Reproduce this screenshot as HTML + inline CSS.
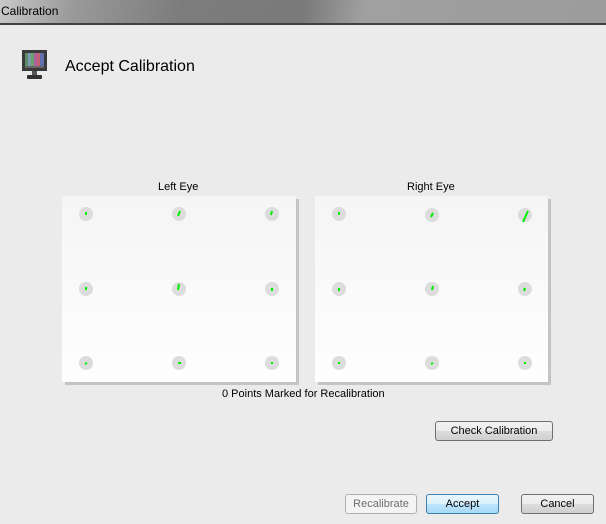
<!DOCTYPE html>
<html><head><meta charset="utf-8"><style>
body{margin:0;width:606px;height:524px;background:#ebebeb;font-family:"Liberation Sans",sans-serif;position:relative;overflow:hidden}
.tb{position:absolute;left:0;top:0;width:606px;height:23px;background:linear-gradient(100deg,#c8c8c8 0%,#9a9a9a 12%,#7c7c7c 30%,#7a7a7a 50%,#a0a0a0 60%,#9c9c9c 100%);border-bottom:1px solid #d0d0d0}
.tb2{position:absolute;left:0;top:23px;width:606px;height:2px;background:#404040}
.tt{position:absolute;left:1px;top:4px;font-size:12px;color:#000}
.h{position:absolute;left:65px;top:58px;font-size:16px;color:#000}
.lbl{position:absolute;font-size:11px;color:#000}
.btn{position:absolute;height:20px;box-sizing:border-box;border:1px solid #707070;border-radius:3px;background:linear-gradient(#f2f2f2 0%,#ebebeb 50%,#dddddd 51%,#cfcfcf 100%);font-size:11px;text-align:center;line-height:19px;color:#000}
</style></head><body>
<div class="tb"></div><div class="tb2"></div>
<div class="tt">Calibration</div>
<svg style="position:absolute;left:20px;top:48px" width="30" height="34">
<rect x="2" y="2" width="25" height="21" fill="#3a3a3a"/>
<rect x="5" y="5" width="19" height="15" fill="#666"/>
<rect x="5" y="5" width="3" height="13" fill="#5a8a6a"/><rect x="8" y="5" width="3" height="13" fill="#7a9ab0"/>
<rect x="11" y="5" width="3" height="13" fill="#6aa06a"/><rect x="14" y="5" width="3" height="13" fill="#b060a0"/>
<rect x="17" y="5" width="3" height="13" fill="#c06070"/><rect x="20" y="5" width="4" height="13" fill="#6070b0"/>
<rect x="12" y="23" width="5" height="4" fill="#555"/>
<rect x="7" y="27" width="15" height="4" rx="1" fill="#333"/>
</svg>
<div class="h">Accept Calibration</div>
<div class="lbl" style="left:158px;top:181px">Left Eye</div>
<div class="lbl" style="left:407px;top:181px">Right Eye</div>
<svg style="position:absolute;left:0;top:0" width="606" height="524">
<defs><linearGradient id="g" x1="0" y1="0" x2="0" y2="1"><stop offset="0" stop-color="#f5f5f5"/><stop offset="1" stop-color="#fefefe"/></linearGradient></defs>
<rect x="65" y="199" width="234" height="186" fill="#c4c4c4"/>
<rect x="62" y="196" width="234" height="186" fill="url(#g)"/>
<rect x="318" y="199" width="233" height="186" fill="#c4c4c4"/>
<rect x="315" y="196" width="233" height="186" fill="url(#g)"/>
<g fill="#dcdcdc">
<circle cx="86" cy="214" r="7"/><circle cx="179" cy="214" r="7"/><circle cx="272" cy="214" r="7"/>
<circle cx="86" cy="289" r="7"/><circle cx="179" cy="289" r="7"/><circle cx="272" cy="289" r="7"/>
<circle cx="86" cy="363" r="7"/><circle cx="179" cy="363" r="7"/><circle cx="272" cy="363" r="7"/>
<circle cx="339" cy="214" r="7"/><circle cx="432" cy="215" r="7"/><circle cx="525" cy="215" r="7"/>
<circle cx="339" cy="289" r="7"/><circle cx="432" cy="289" r="7"/><circle cx="525" cy="289" r="7"/>
<circle cx="339" cy="363" r="7"/><circle cx="432" cy="363" r="7"/><circle cx="525" cy="363" r="7"/>
</g>
<g stroke="#00ee00" stroke-width="2" fill="none">
<path d="M86 212v3"/><path d="M180 211l-2 5"/><path d="M272 211l-1 4"/>
<path d="M86 287v3"/><path d="M179 284l-1 6"/><path d="M272 288v3"/>
<path d="M85 364l2-1"/><path d="M178 363h3"/><path d="M272 362v2"/>
<path d="M339 212v3"/><path d="M433 213l-2 4"/><path d="M528 211l-5 11"/>
<path d="M339 288v3"/><path d="M433 286l-1 4"/><path d="M525 288l-1 3"/>
<path d="M338 363h2"/><path d="M431 364l2-1"/><path d="M525 362v2"/>
</g>
</svg>
<div class="lbl" style="left:222px;top:388px">0 Points Marked for Recalibration</div>
<div class="btn" style="left:435px;top:421px;width:118px">Check Calibration</div>
<div class="btn" style="left:345px;top:494px;width:72px;border-color:#b0b0b0;color:#6d6d6d;background:#f4f4f4">Recalibrate</div>
<div class="btn" style="left:426px;top:494px;width:73px;border-color:#3c7fb1;background:linear-gradient(#eaf6fd,#d9f0fc 50%,#bee6fd 51%,#a7d9f5)">Accept</div>
<div class="btn" style="left:521px;top:494px;width:73px">Cancel</div>
</body></html>
